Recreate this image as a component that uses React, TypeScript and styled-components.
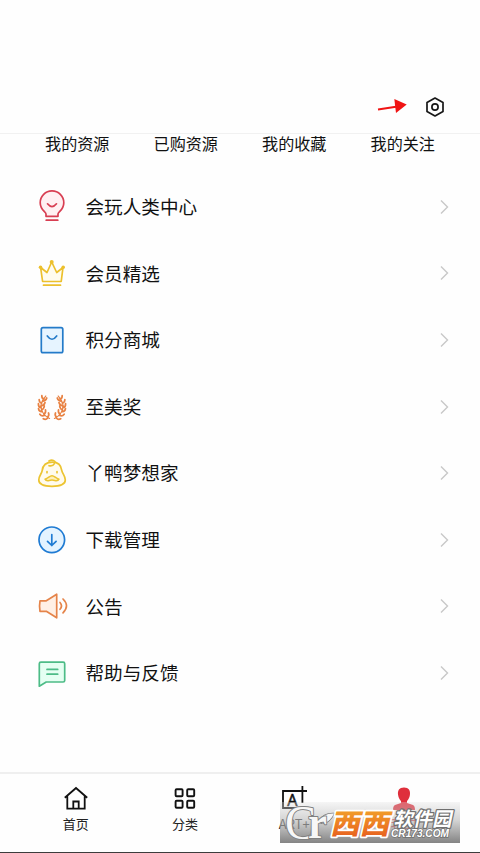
import React from 'react';
import styled, { createGlobalStyle } from 'styled-components';

const GlobalStyle = createGlobalStyle`
  * { box-sizing: border-box; }
  body { margin: 0; background: #fefefe; font-family: "Noto Sans CJK SC", "Noto Sans", sans-serif; color: #111; }
`;

const Page = styled.div`
  width: 480px;
  height: 853px;
  display: flex;
  flex-direction: column;
  overflow: hidden;
  background: #fefefe;
`;

const Header = styled.header`
  height: 134px;
  flex: none;
  display: flex;
  align-items: flex-end;
  justify-content: flex-end;
  gap: 16px;
  padding: 0 34px 14px 0;
  border-bottom: 1px solid #f1f1f1;
`;

const Tabs = styled.nav`
  display: grid;
  grid-template-columns: repeat(4, 108.5px);
  padding-left: 23px;
  height: 39.5px;
  flex: none;
`;

const Tab = styled.span`
  text-align: center;
  font-size: 16.1px;
  line-height: 18px;
  white-space: nowrap;
`;

const List = styled.main`
  flex: 1;
`;

const Row = styled.div`
  height: 66.6px;
  display: flex;
  align-items: center;
  padding: 0 30px 0 32px;
`;

const RowIcon = styled.span`
  width: 40px;
  height: 40px;
  flex: none;
  svg { display: block; }
`;

const RowLabel = styled.span`
  flex: 1;
  margin-left: 13.5px;
  padding-bottom: 1.5px;
  font-size: 18.6px;
  line-height: 28px;
`;

const Footer = styled.footer`
  position: relative;
  height: 81px;
  flex: none;
  display: grid;
  grid-template-columns: repeat(4, 109.3px);
  padding-left: 21px;
  border-top: 2px solid #efefef;
  border-bottom: 1px solid #3c3c3c;
`;

const NavItem = styled.div<{ $active?: boolean }>`
  display: flex;
  flex-direction: column;
  align-items: center;
  padding-top: 11px;
  font-size: 13px;
  line-height: 18px;
  color: ${p => (p.$active ? '#df2f3c' : '#222')};
  svg { display: block; margin-bottom: 2px; }
`;

const Watermark = styled.div`
  position: absolute;
  left: 280px;
  top: 28px;
  width: 180px;
  height: 41px;
  background: linear-gradient(rgba(225, 225, 225, 0.3), rgba(185, 185, 185, 0.62) 45%, rgba(115, 115, 115, 0.88));
  svg { display: block; overflow: visible; }
`;

type IconProps = { color: string; children: React.ReactNode };
const Icon = ({ color, children }: IconProps) => (
  <svg width="40" height="40" viewBox="0 0 40 40" fill="none" stroke={color} strokeWidth="1.7" strokeLinecap="round" strokeLinejoin="round">
    {children}
  </svg>
);

const Bulb = () => (
  <Icon color="#d83e52">
    <path d="M14 29.3V27c0-2-5.8-4-5.8-11.3a11.8 11.8 0 0 1 23.6 0C31.8 23 26 25 26 27v2.3Z" fill="#fff0f2" />
    <path d="M15.5 16.8q4.5 5.6 9 0M14.2 33.2h11.6" />
  </Icon>
);

const Crown = () => (
  <Icon color="#ecc02d">
    <path d="m10.6 28.5-2-14 6.4 5L19.7 9l5 10.5 6.3-5-1.8 14Z" fill="#fffcee" />
    <path d="M11.5 32.2h17" />
    <g fill="#ecc02d" stroke="none"><circle cx="8.5" cy="14.2" r="1.8" /><circle cx="19.7" cy="8.9" r="2" /><circle cx="31.2" cy="14.2" r="1.8" /></g>
  </Icon>
);

const Bag = () => (
  <Icon color="#247bc9">
    <rect x="9.3" y="7.7" width="21.5" height="25" rx="1.7" fill="#e6f4ff" />
    <path d="M15.3 16q4.7 6.5 9.4 0" />
  </Icon>
);

const Branch = () => (
  <>
    <path d="M13.5 9Q6 17 9.5 24q2.5 5 8 7.5" strokeWidth="1.1" />
    <path d="M11.5 12q-2.5-.5-2.2-3.3M9 16.2q-2.6-.8-2.5-3.6M8.2 20.5q-2.7-.6-2.5-3.8M9.3 24.7q-3 .2-3.5-3M12 28.4q-3 1.2-4.8-1.2M15.5 31q-2 2.3-4.7.8M10.2 14.2q3.2 0 4.3-3.2M8.5 18.8q3.4-.2 4.2-3.2M8.9 23q2.8-1.2 3-4M11.7 27.2q2.2-1.8 1.4-4.4M15.4 30q2-1.7.9-4" strokeWidth="1.8" />
  </>
);

const Laurel = () => (
  <Icon color="#e88243">
    <g transform="translate(1 0) scale(.95 1)">
      <Branch />
      <g transform="matrix(-1 0 0 1 40 0)"><Branch /></g>
    </g>
  </Icon>
);

const Duck = () => (
  <Icon color="#ecc431">
    <path d="M20.5 9.2c-6 0-9.7 2.5-10.4 8.6-.3 2.8-3.3 5-3.3 9.2 0 4.6 5.4 6.3 13.2 6.3S33.3 31.3 33.3 27c0-4.2-3-6.4-3.4-9.2-.8-6.1-3.9-8.6-9.4-8.6Z" fill="#fffbed" />
    <path d="M17 8q3.2-2.2 6 .5M17 12.7q3.6 1 5.4-2.1" />
    <path d="M15 18.5v1.2M25 18.5v1.2" />
    <path d="M13 26.2c3.5-.9 4.5-3.4 7-3.4s3.5 2.5 7 3.4c-1.6 3-3.9.8-7 .8s-5.4 2.2-7-.8Z" fill="#fff0b8" strokeWidth="1.5" />
  </Icon>
);

const Download = () => (
  <Icon color="#1f7bd3">
    <circle cx="19.8" cy="19.8" r="12.8" fill="#e4f3ff" />
    <path d="M19.8 14.5v11M15.5 21.3l4.3 4.2 4.3-4.2" />
  </Icon>
);

const Speaker = () => (
  <Icon color="#e5844a">
    <path d="M8 14.8h6.3l10.4-6.6v23.6l-10.4-6.5H8q-1-5.2 0-10.5Z" fill="#fff0e5" />
    <path d="M28 16.5q3 3.3 0 6.8M31 13q7 6.8 0 13.8" />
  </Icon>
);

const Message = () => (
  <Icon color="#4dbc87">
    <path d="M8.9 9.2h22.2q1.6 0 1.6 1.6v16.6q0 1.6-1.6 1.6H14.2l-6.9 4.2V10.8q0-1.6 1.6-1.6Z" fill="#e5fff2" />
    <path d="M15 16.4h10.7M15 21.2h10.7" />
  </Icon>
);

const rows = [
  { label: '会玩人类中心', icon: <Bulb /> },
  { label: '会员精选', icon: <Crown /> },
  { label: '积分商城', icon: <Bag /> },
  { label: '至美奖', icon: <Laurel /> },
  { label: '丫鸭梦想家', icon: <Duck /> },
  { label: '下载管理', icon: <Download /> },
  { label: '公告', icon: <Speaker /> },
  { label: '帮助与反馈', icon: <Message /> },
];

const Chevron = () => (
  <svg width="12" height="16" viewBox="0 0 12 16" fill="none" stroke="#c8c8c8" strokeWidth="1.4"><path d="m3 1.5 6.5 6.5L3 14.5" /></svg>
);

const Arrow = () => (
  <svg width="32" height="20" viewBox="0 0 32 20"><path d="M2 10.6 20 7.8" stroke="#f01414" strokeWidth="2" /><path d="M18.3 0 30.7 5.5 20 14Z" fill="#f01414" /></svg>
);

const Settings = () => (
  <svg width="22" height="24" viewBox="0 0 22 24" fill="none" stroke="#171717" strokeWidth="1.7" strokeLinejoin="round">
    <path d="m11 3 8 4.4v9.2L11 21l-8-4.4V7.4Z" /><circle cx="11" cy="12" r="3.1" />
  </svg>
);

const Home = () => (
  <svg width="26" height="28" viewBox="0 0 26 28" fill="none" stroke="#111" strokeWidth="1.8"><path d="M1.8 12.8 13 3l11.2 9.8M4.3 11v12.7h17.4V11M10.3 23.5v-7h5.4v7" /></svg>
);

const Grid = () => (
  <svg width="26" height="28" viewBox="0 0 26 28" fill="none" stroke="#111" strokeWidth="1.9">
    <rect x="3.6" y="4.2" width="7" height="7" rx="1" /><rect x="15.2" y="4.2" width="7" height="7" rx="1" />
    <rect x="3.6" y="15.8" width="7" height="7" rx="1" /><rect x="15.2" y="15.8" width="7" height="7" rx="1" />
  </svg>
);

const Art = () => (
  <svg width="26" height="28" viewBox="0 0 26 28" fill="none" stroke="#111" strokeWidth="1.8">
    <path d="M26 6H2v17h19.5M21.4 1v17" />
    <text x="11.3" y="20.5" textAnchor="middle" fontFamily="Noto Sans" fontSize="16" fill="#111" strokeWidth=".5" stroke="#111">A</text>
  </svg>
);

const Person = () => (
  <svg width="26" height="28" viewBox="0 0 26 28">
    <path d="M13 2.5c-4.8 0-6.6 3.2-5.9 7.4.4 2.8 1.6 4.6 2.9 6.1v2L4 20q-2 1-2 5h22q0-4-2-5l-6-2v-2c1.3-1.5 2.5-3.3 2.9-6.1.7-4.2-1.1-7.4-5.9-7.4Z" fill="#df2f3c" />
  </svg>
);

const SiteMark = () => (
  <svg width="180" height="41" viewBox="0 0 180 41">
    <defs>
      <linearGradient id="orange" x1="0" y1="0" x2="0" y2="1"><stop stopColor="#f5b32e" /><stop offset="1" stopColor="#e6571d" /></linearGradient>
    </defs>
    <g fill="#f7f7f7" stroke="#808080" strokeWidth="2" strokeLinejoin="round" paintOrder="stroke" fontFamily="Liberation Serif">
      <text x="5" y="36.5" fontSize="49" textLength="31" lengthAdjust="spacingAndGlyphs">C</text>
      <path d="M40 19q3-8 14-7.5-4 8.5-10 9.5-4 1-4-2Z" strokeWidth="1.5" />
      <text x="28" y="35.5" fontSize="46" fontWeight="700" textLength="19" lengthAdjust="spacingAndGlyphs">r</text>
    </g>
    <g fontFamily="Noto Sans CJK SC" fontWeight="900" strokeLinejoin="round" paintOrder="stroke">
      <g transform="translate(50 31.5) skewX(-13)">
        <text fontSize="28" textLength="59" lengthAdjust="spacingAndGlyphs" fill="url(#orange)" stroke="#fff" strokeWidth="3.4">西西</text>
      </g>
      <g transform="translate(113.5 24.2) skewX(-12)">
        <text fontSize="19.5" textLength="58" lengthAdjust="spacingAndGlyphs" fill="#fff" stroke="#707070" strokeWidth="2.5" fontWeight="700">软件园</text>
      </g>
    </g>
    <text x="111" y="35" fontFamily="Liberation Sans" fontSize="10.5" fontStyle="italic" fontWeight="700" textLength="58" lengthAdjust="spacingAndGlyphs" fill="#fff" stroke="#707070" strokeWidth="1.6" paintOrder="stroke">CR173.COM</text>
  </svg>
);

export default function App() {
  return (
    <Page>
      <GlobalStyle />
      <Header><Arrow /><Settings /></Header>
      <Tabs>{['我的资源', '已购资源', '我的收藏', '我的关注'].map(t => <Tab key={t}>{t}</Tab>)}</Tabs>
      <List>
        {rows.map(r => <Row key={r.label}><RowIcon>{r.icon}</RowIcon><RowLabel>{r.label}</RowLabel><Chevron /></Row>)}
      </List>
      <Footer>
        <NavItem><Home />首页</NavItem>
        <NavItem><Grid />分类</NavItem>
        <NavItem><Art />ART+</NavItem>
        <NavItem $active><Person />我的</NavItem>
        <Watermark><SiteMark /></Watermark>
      </Footer>
    </Page>
  );
}
